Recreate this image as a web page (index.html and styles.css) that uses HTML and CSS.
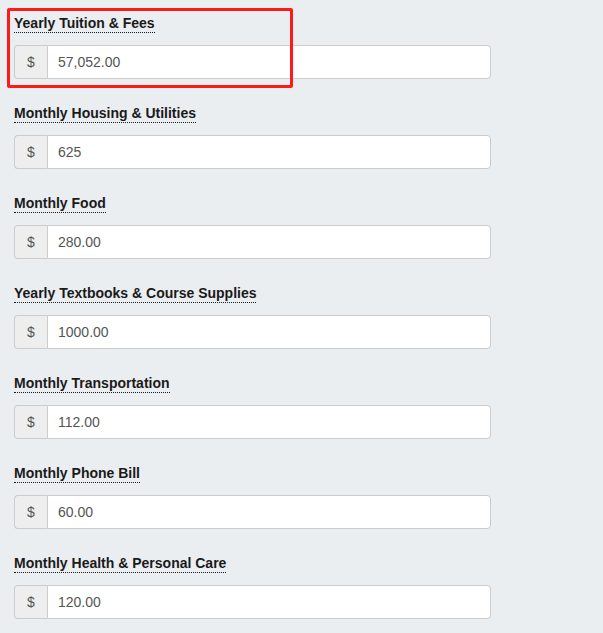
FILE: index.html
```html
<!DOCTYPE html>
<html lang="en">
<head>
  <meta charset="UTF-8">
  <meta name="viewport" content="width=device-width, initial-scale=1.0">
  <title>College Costs</title>
  <link rel="stylesheet" href="styles.css">
</head>
<body>
  <div class="form">
    <div class="field highlighted">
      <label class="field-label" for="tuition">Yearly Tuition &amp; Fees</label>
      <div class="input-group">
        <span class="addon">$</span>
        <input type="text" id="tuition" value="57,052.00">
      </div>
      <div class="highlight"></div>
    </div>

    <div class="field">
      <label class="field-label" for="housing">Monthly Housing &amp; Utilities</label>
      <div class="input-group">
        <span class="addon">$</span>
        <input type="text" id="housing" value="625">
      </div>
    </div>

    <div class="field">
      <label class="field-label" for="food">Monthly Food</label>
      <div class="input-group">
        <span class="addon">$</span>
        <input type="text" id="food" value="280.00">
      </div>
    </div>

    <div class="field">
      <label class="field-label" for="books">Yearly Textbooks &amp; Course Supplies</label>
      <div class="input-group">
        <span class="addon">$</span>
        <input type="text" id="books" value="1000.00">
      </div>
    </div>

    <div class="field">
      <label class="field-label" for="transport">Monthly Transportation</label>
      <div class="input-group">
        <span class="addon">$</span>
        <input type="text" id="transport" value="112.00">
      </div>
    </div>

    <div class="field">
      <label class="field-label" for="phone">Monthly Phone Bill</label>
      <div class="input-group">
        <span class="addon">$</span>
        <input type="text" id="phone" value="60.00">
      </div>
    </div>

    <div class="field">
      <label class="field-label" for="health">Monthly Health &amp; Personal Care</label>
      <div class="input-group">
        <span class="addon">$</span>
        <input type="text" id="health" value="120.00">
      </div>
    </div>
  </div>
</body>
</html>
```

FILE: styles.css
```css
body {
  margin: 0;
  background-color: #ebeef0;
  font-family: "Liberation Sans", Arial, sans-serif;
}
.form {
  width: 477px;
  padding: 14px 0 0 14px;
}
.field {
  position: relative;
  display: flex;
  flex-direction: column;
  align-items: flex-start;
  margin-bottom: 25px;
}
.field-label {
  font-size: 14px;
  font-weight: bold;
  line-height: 18px;
  color: #1a1a1a;
  border-bottom: 1px dotted #1a1a1a;
  margin-bottom: 12px;
}
.input-group {
  display: flex;
  align-self: stretch;
  height: 34px;
}
.addon {
  width: 33px;
  box-sizing: border-box;
  display: flex;
  align-items: center;
  justify-content: center;
  background-color: #eee;
  color: #555;
  font-size: 14px;
  border: 1px solid #ccc;
  border-right: none;
  border-radius: 4px 0 0 4px;
}
.input-group input {
  flex: 1;
  min-width: 0;
  box-sizing: border-box;
  height: 34px;
  padding: 6px 10px;
  font-family: "Liberation Sans", Arial, sans-serif;
  font-size: 14px;
  color: #555;
  background-color: #fff;
  border: 1px solid #ccc;
  border-radius: 0 4px 4px 0;
  outline: none;
}
/* marco vermelho por cima do primeiro campo */
.highlight {
  position: absolute;
  left: -7px;
  top: -6px;
  width: 280px;
  height: 74px;
  border: 3px solid #ff1a1a;
  border-radius: 2px;
  pointer-events: none;
}
```
